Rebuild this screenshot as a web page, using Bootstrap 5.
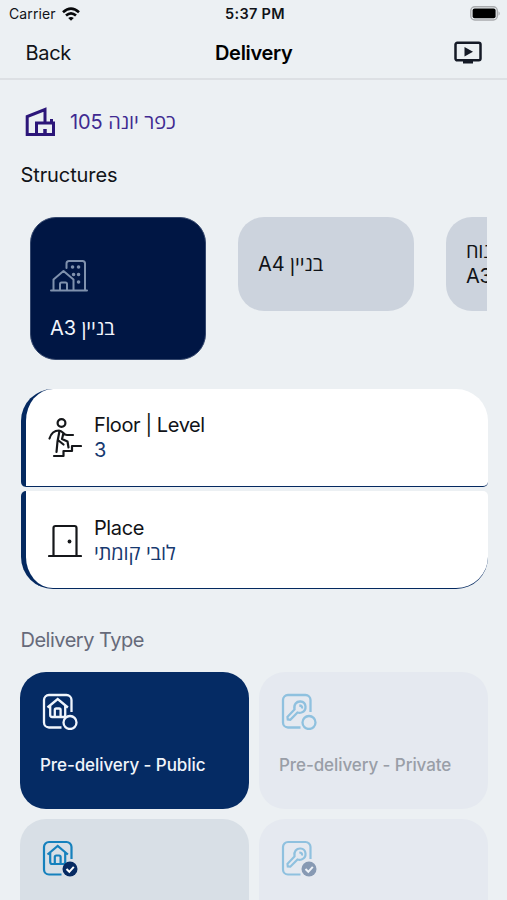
<!DOCTYPE html>
<html lang="en">
<head>
<meta charset="utf-8">
<meta name="viewport" content="width=device-width, initial-scale=1">
<title>Delivery</title>
<link href="https://cdn.jsdelivr.net/npm/bootstrap@5.3.0/dist/css/bootstrap.min.css" rel="stylesheet">
<style>
  body { background: #ecf0f3; color: #111318; font-family: Inter, "Open Sans", "Noto Sans", sans-serif; font-size: 20px; line-height: 25px; letter-spacing: -.3px; height: 900px; overflow: hidden; }
  svg { display: block; flex: none; fill: none; }
  [dir="rtl"] { letter-spacing: -.1px; }
  .status { height: 27px; font-size: 14px; line-height: 27px; padding: 0 6px 0 9px; letter-spacing: .1px; }
  .clock { font-size: 14.5px; letter-spacing: .3px; }
  .wifi { margin-left: 6px; }
  .topbar { height: 53px; padding: 1px 25px 0 25.5px; border-bottom: 2px solid #dde0e4; }
  .side { flex: 1 1 0; }
  .project { height: 42px; margin-top: 21px; padding-left: 25px; gap: 14px; color: #402a91; }
  .section-title { padding-left: 20.5px; }
  .heading-structures { margin-top: 20px; letter-spacing: -.1px; }
  .heading-types { margin-top: 39px; color: #666a7a; letter-spacing: -.5px; }
  .structures { margin: 29px 20px 0; padding-left: 10px; gap: 32px; height: 143px; overflow: hidden; }
  .structure { flex: 0 0 176px; height: 94px; border-radius: 26px; background: #ccd3dd; padding: 0 20px; text-align: left; }
  .structure.active { height: 143px; background: #001644; color: #f1f4fb; padding-top: 42px; border: 1px solid #34476d; padding-left: 19px; }
  .panel { height: 98px; margin: 0 19.5px 0 20.5px; background: #fff; border: solid #042960; border-width: 0 0 1.5px 5px; padding-left: 22px; gap: 12.5px; letter-spacing: -.4px; }
  .panel.upper { border-radius: 32px 32px 5px 5px; margin-top: 29px; }
  .panel.lower { border-radius: 5px 5px 32px 32px; margin-top: 4px; padding-top: 2px; }
  .value { color: #17396f; }
  .types { margin: 19px 19px 0 20px; gap: 10px; }
  .types + .types { margin-top: 10px; }
  .type { flex: 1 1 0; height: 137px; border-radius: 26px; padding: 21px 20px; font-size: 17px; font-weight: 500; letter-spacing: -.08px; }
  .type svg { margin-left: 2px; }
  .type .name { margin-top: 23px; line-height: 24px; white-space: nowrap; }
  .chosen { background: #052b64; color: #f0f4fb; }
  .idle { background: #d8dfe6; color: #17396f; }
  .off { background: #e5e9f0; color: #999ea7; }
</style>
</head>
<body>
<svg width="0" height="0" class="position-absolute">
  <defs>
    <g id="frame"><path d="M29.500 19V7a5 5 0 0 0-5-5H7a5 5 0 0 0-5 5v22.500a5 5 0 0 0 5 5h12.500"/></g>
    <g id="home"><path d="M5.500 14.500 15.700 6l10.200 8.500M8.200 12.500v9.500q0 2 2 2h11q2 0 2-2v-9.500M12.800 23.500V17q0-1.500 1.500-1.500h2.800q1.500 0 1.500 1.500v6.500"/></g>
    <g id="key"><path d="M13.500 16.500c-1-5 2-8.300 6-8 6 .5 7 8.800 1 11-1.500.5-3 .3-4 0l-7.200 7.200-2.500-.2-.3-2.700z"/><path d="M18.300 12.500q3.200.2 2.700 3"/></g>
  </defs>
</svg>

<div class="status d-flex align-items-center">
  <div class="side d-flex align-items-center">
    <span>Carrier</span>
    <svg class="wifi" width="18" height="14" viewBox="0 0 18 14" stroke="#08090b" stroke-width="2.700"><path d="M1 5.200q8-7 16 0M4 8.600q5-4.300 10 0"/><path d="M6.200 11Q9 8.800 11.800 11L9 13.800z" fill="#08090b" stroke="none"/></svg>
  </div>
  <span class="clock fw-semibold">5:37 PM</span>
  <div class="side d-flex justify-content-end">
    <svg width="31" height="15" viewBox="0 0 31 15"><rect x=".8" y=".8" width="26.500" height="13.200" rx="4" stroke="#a9abae" stroke-width="1.400"/><rect x="2.600" y="2.600" width="23" height="9.600" rx="2" fill="#000"/><path d="M28.500 5.200q2.500 2.200 0 4.600z" fill="#a9abae"/></svg>
  </div>
</div>

<nav class="topbar d-flex align-items-center">
  <div class="side">Back</div>
  <div class="fw-semibold text-black">Delivery</div>
  <div class="side d-flex justify-content-end">
    <svg width="28" height="24" viewBox="0 0 28 24"><rect x="1.500" y="1.800" width="25" height="17.500" rx="1.800" stroke="#151a26" stroke-width="2.500"/><path d="M9 19.500h10v3H9zM10.500 6v9.500l8.500-4.800z" fill="#151a26"/></svg>
  </div>
</nav>

<div class="project d-flex align-items-center">
  <svg width="31" height="30" viewBox="0 0 31 30" stroke="#2c1679" stroke-width="3"><path d="M12 27.500H2.200V9.500L20 2.500V15"/><path d="M11.500 27.500V16h10.500M22 16h6.500v11.500h-17M26.500 12v4"/><path d="M20 22v5" stroke-width="3.500"/></svg>
  <span dir="rtl">כפר יונה 105</span>
</div>

<div class="section-title heading-structures">Structures</div>

<div class="structures d-flex align-items-start">
  <div class="structure active">
    <svg width="38" height="32" viewBox="0 0 38 32" stroke="#7f91ad" stroke-width="2" stroke-linecap="round" stroke-linejoin="round"><path d="M1 30.500h36M3.500 30V19.500L13.500 11l10 8.500V30M10 30v-6q0-1.500 1.500-1.500h4q1.500 0 1.500 1.500v6M16.500 8V3.500Q16.500 1 19 1h13.500Q35 1 35 3.500V30"/><path d="M22.500 7h.1M28.500 7h.1M28.500 14.500h.1M28.500 22h.1M23.500 14.500h.1" stroke-width="3.500"/></svg>
    <div class="mt-4"><span dir="rtl">בניין A3</span></div>
  </div>
  <div class="structure d-flex align-items-center"><span dir="rtl">בניין A4</span></div>
  <div class="structure d-flex align-items-center"><div>מנוח<br>A3</div></div>
</div>

<div class="panel upper d-flex align-items-center">
  <svg width="34" height="40" viewBox="0 0 34 40" stroke="#15171a" stroke-width="2.200" stroke-linecap="round" stroke-linejoin="round"><circle cx="13.500" cy="5" r="3.900"/><path d="M1.500 20.500c1.500-5 5-8 9.500-8 4 0 4 4.500 8 4.500h6M11.500 13l-2 10.500L8.500 34M15.500 15l-1.500 6 5.500 2.500 1 6M10.500 22.500l5 4"/><path d="M6 38h9.500v-5h8.500v-5h9"/></svg>
  <div><div>Floor | Level</div><div class="value">3</div></div>
</div>
<div class="panel lower d-flex align-items-center">
  <svg width="34" height="36" viewBox="0 0 34 36" stroke="#15171a" stroke-width="2.200" stroke-linecap="round"><path d="M1 33h32M5.500 33V5q0-2 2-2h19q2 0 2 2v28"/><circle cx="21.500" cy="18.500" r="1.900" fill="#15171a" stroke="none"/></svg>
  <div><div>Place</div><div class="value"><span dir="rtl">לובי קומתי</span></div></div>
</div>

<div class="section-title heading-types">Delivery Type</div>

<div class="types d-flex">
  <div class="type chosen">
    <svg width="36" height="37" viewBox="0 0 36 37" stroke="#f0f5fc" stroke-width="2.300"><use href="#frame"/><use href="#home"/><circle cx="28" cy="29.500" r="6.500"/></svg>
    <div class="name">Pre-delivery - Public</div>
  </div>
  <div class="type off">
    <svg width="36" height="37" viewBox="0 0 36 37" stroke="#8fc1df" stroke-width="2.300"><use href="#frame"/><use href="#key"/><circle cx="28" cy="29.500" r="6.500"/></svg>
    <div class="name">Pre-delivery - Private</div>
  </div>
</div>
<div class="types d-flex">
  <div class="type idle">
    <svg width="36" height="37" viewBox="0 0 36 37" stroke="#1681bd" stroke-width="2.200"><use href="#frame"/><use href="#home"/><circle cx="28" cy="29" r="7.500" fill="#062a63" stroke="none"/><path d="m24.500 29 2.800 2.800 4.500-5" stroke="#fff" stroke-width="2"/></svg>
  </div>
  <div class="type off">
    <svg width="36" height="37" viewBox="0 0 36 37" stroke="#8fc1df" stroke-width="2.200"><use href="#frame"/><use href="#key"/><circle cx="28" cy="29" r="7.500" fill="#8799b3" stroke="none"/><path d="m24.500 29 2.800 2.800 4.500-5" stroke="#eef2f8" stroke-width="2"/></svg>
  </div>
</div>
<script src="https://cdn.jsdelivr.net/npm/bootstrap@5.3.0/dist/js/bootstrap.bundle.min.js"></script>
</body>
</html>
